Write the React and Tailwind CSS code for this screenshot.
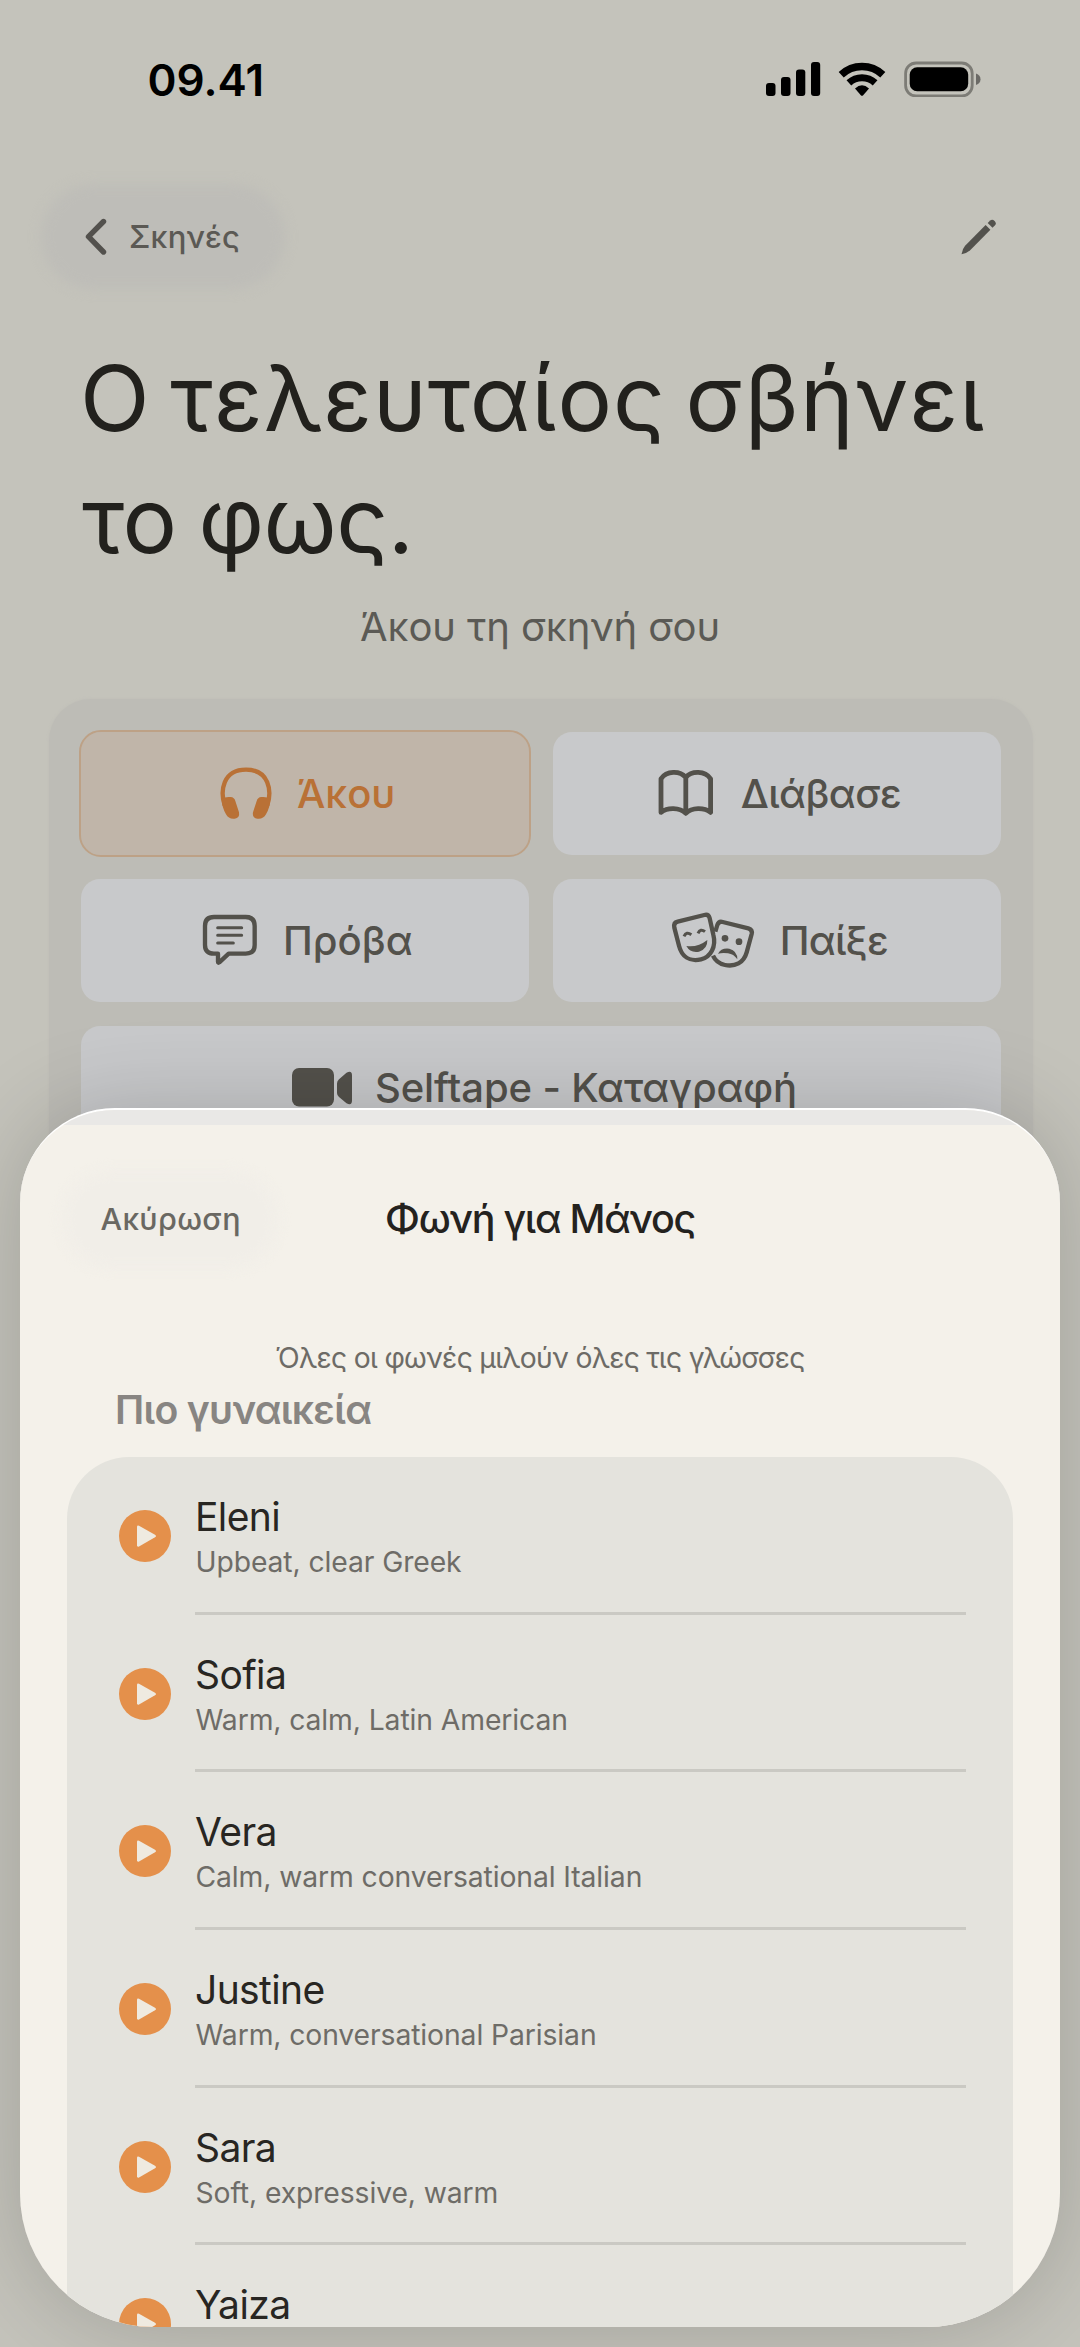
import React from "react";

const voices = [
  { name: "Eleni", note: "Upbeat, clear Greek" },
  { name: "Sofia", note: "Warm, calm, Latin American" },
  { name: "Vera", note: "Calm, warm conversational Italian" },
  { name: "Justine", note: "Warm, conversational Parisian" },
  { name: "Sara", note: "Soft, expressive, warm" },
  { name: "Yaiza", note: "" },
];

function SignalIcon() {
  return (
    <svg className="h-[36px] w-[55px]" viewBox="766 61 55 36">
      <rect x="766" y="83" width="9.5" height="13" rx="3" />
      <rect x="781" y="77" width="9.5" height="19" rx="3" />
      <rect x="796" y="69.5" width="9.3" height="26.5" rx="3" />
      <rect x="811" y="62" width="9.2" height="34" rx="3" />
    </svg>
  );
}

function WifiIcon() {
  return (
    <svg className="ml-[17px] h-[36px] w-[48px]" viewBox="838 61 48 36">
      <g fill="none" stroke="#000">
        <path d="M841.2 74.8 A30.4 30.4 0 0 1 882.8 74.8" strokeWidth="7.4" />
        <path d="M848.9 82.9 A19.4 19.4 0 0 1 875.1 82.9" strokeWidth="7" />
      </g>
      <path d="M855 88.6 Q862 82 869 88.6 L863.2 95.2 Q862 96.5 860.8 95.2Z" />
    </svg>
  );
}

function BatteryIcon() {
  return (
    <svg className="ml-[18px] h-[36px] w-[77px]" viewBox="904 61 77 36">
      <rect x="905.6" y="63" width="66.6" height="33" rx="10.5" fill="none" stroke="#7d7c76" strokeWidth="2.8" />
      <rect x="909.7" y="67.2" width="58.5" height="24" rx="7.5" />
      <path d="M976 73.5 Q980.5 75 980.5 79.3 Q980.5 83.5 976 85Z" fill="#6b6a66" />
    </svg>
  );
}

function PencilIcon() {
  return (
    <svg className="h-[36px] w-[36px]" viewBox="960 218 36 36" fill="#53524d">
      <path d="M984.6 223.9 L989.4 228.7 L968.9 249.4 Q966 252 960.500 253.200 Q961.500 247.500 964.100 244.700Z" />
      <path d="M986.7 222 L989.2 219.600 Q991.300 217.900 993.600 220 Q995.800 222.200 994 224.300 L991.500 226.800Z" />
    </svg>
  );
}

function HeadphonesIcon() {
  return (
    <svg className="h-[54px] w-[54px]" viewBox="87 50 162 162" fill="#b97136">
      <path d="M104 168 C90 125 98 61 168 61 C238 61 246 125 232 168" fill="none" stroke="#b97136" strokeWidth="13" />
      <path d="M95 150 Q105 141 122 143 Q133 144 136 155 L147 189 Q150 206 134 208 Q116 210 108 195 Q96 175 95 150Z" />
      <path d="M241 150 Q231 141 214 143 Q203 144 200 155 L189 189 Q186 206 202 208 Q220 210 228 195 Q240 175 241 150Z" />
    </svg>
  );
}

function BookIcon() {
  return (
    <svg className="h-[50px] w-[58px]" viewBox="656 769 58 50" fill="none" stroke="#53514b" strokeWidth="4.8" strokeLinejoin="round" strokeLinecap="round">
      <path d="M684.8 778.5 C679 771.5 665.5 771.5 660 779.8 V813.4 C666.5 808.3 678.5 808.3 684.8 814.4 C691 808.3 703 808.3 709.6 813.4 V779.8 C704 771.5 690.5 771.5 684.8 778.5 V814" />
    </svg>
  );
}

function ChatIcon() {
  return (
    <svg className="h-[54px] w-[56px]" viewBox="36 492 168 162" fill="none" stroke="#53514b" strokeLinecap="round" strokeLinejoin="round">
      <path d="M72 504 H167 Q194 504 194 531 V588 Q194 614 167 614 H116 L88 640 Q84 643 84 638 V614 H72 Q45 614 45 588 V531 Q45 504 72 504Z" strokeWidth="13" />
      <path d="M83 536 H155 M83 559 H155 M83 582 H130" strokeWidth="9" />
    </svg>
  );
}

function MasksIcon() {
  return (
    <svg className="h-[62px] w-[88px]" viewBox="27 28 264 186" fill="none" stroke="#53514b" strokeLinejoin="round">
      <path d="M50 66 L130 46 Q143 43 146 56 L157 105 C166 140 150 172 120 179 C85 187 62 170 54 138 L40 84 Q37 69 50 66Z" strokeWidth="13" />
      <path d="M163 96 L169 76 Q173 64 185 67 L262 86 Q275 90 272 103 L257 158 C248 190 222 202 192 196 C174 192 162 182 156 168" strokeWidth="13" />
      <path d="M69 110 Q76 94 91 105 M111 101 Q118 85 132 96" strokeWidth="9" />
      <g fill="#53514b" stroke="none">
        <path d="M76 139 Q110 144 139 121 Q140 148 114 156 Q88 161 76 139Z" />
        <circle cx="192" cy="116" r="10" />
        <circle cx="234" cy="126" r="10" />
        <path d="M171 162 Q180 144 205 147 Q229 153 229 179 Q218 163 201 161 Q185 158 171 162Z" />
      </g>
    </svg>
  );
}

function VideoIcon() {
  return (
    <svg className="h-[40px] w-[62px]" viewBox="290 1068 62 40" fill="#53514b">
      <rect x="291" y="1069" width="42" height="38.5" rx="7" />
      <path d="M336 1084.5 Q336 1082 338 1080.2 L345.5 1073.8 Q351 1071 351 1076.5 V1101.5 Q351 1107 345.5 1104.2 L338 1098 Q336 1096.5 336 1094Z" />
    </svg>
  );
}

function PlayIcon() {
  return (
    <svg className="ml-[51px] h-[54px] w-[54px] shrink-0" viewBox="0 0 54 54">
      <circle cx="27" cy="27" r="26" fill="#e4904b" />
      <path d="M21 16.700 L37 25.700 Q39 27 37 28.300 L21 37.500 Q19 38.200 19 36.200 V18 Q19 16 21 16.700Z" fill="#efeae0" />
    </svg>
  );
}

const tile = "flex h-[123.5px] items-center rounded-[19px] bg-[#c8c9cb] text-[40px] font-medium text-[#53514b]";

function ScenePage() {
  return (
    <div className="h-full w-full">
      <div className="flex h-[158px] items-center">
        <span className="ml-[147.5px] mt-[2px] text-[44px] font-semibold leading-none text-black">09.41</span>
        <div className="ml-auto mr-[99px] flex items-center">
          <SignalIcon />
          <WifiIcon />
          <BatteryIcon />
        </div>
      </div>

      <div className="mt-[23px] flex h-[111px] items-center justify-between pr-[83.5px]">
        <div className="relative ml-[38px] flex h-[111px] w-[250px] items-center">
          <div className="absolute inset-[3px] rounded-full bg-[#bebdb8] blur-[6px]" />
          <svg className="relative ml-[46px] h-[38px] w-[24px]" viewBox="0 0 24 38" fill="none" stroke="#53514d" strokeWidth="5.4" strokeLinecap="round" strokeLinejoin="round">
            <path d="M19.5 3.500 L4.500 18.700 L19.500 34" />
          </svg>
          <span className="relative ml-[21px] text-[31px] font-medium leading-none tracking-[0.150px] text-[#5b5954]">Σκηνές</span>
        </div>
        <PencilIcon />
      </div>

      <h1 className="ml-[80px] mt-[45px] text-[91px] leading-[122px] text-[#22211d]">
        <span className="block whitespace-nowrap tracking-[1.05px] [word-spacing:-7px]">Ο τελευταίος σβήνει</span>
        <span className="ml-[2px] block whitespace-nowrap tracking-[-0.5px] [word-spacing:-3px]">το φως.</span>
      </h1>
      <p className="mt-[22px] text-center text-[40px] leading-[48px] tracking-[-0.1px] text-[#5b5a55]">Άκου τη σκηνή σου</p>

      <div className="ml-[49px] mt-[47.5px] h-[600px] w-[984px] rounded-[42px] bg-[#bdbcb6] px-[32px] pt-[33px] shadow-[0_0_3px_#bdbcb6]">
        <div className="grid grid-cols-2 gap-[23.5px]">
          <div className="flex h-[123.5px] items-center rounded-[20px] bg-[#c0b5a9] text-[40px] font-medium text-[#b97136] outline-2 outline-[#bda186]">
            <div className="ml-[138px]"><HeadphonesIcon /></div>
            <span className="ml-[24px] mt-[2px]">Άκου</span>
          </div>
          <div className={tile}>
            <div className="ml-[104px]"><BookIcon /></div>
            <span className="ml-[26px] mt-[2px] tracking-[-0.6px]">Διάβασε</span>
          </div>
          <div className={tile}>
            <div className="ml-[121px]"><ChatIcon /></div>
            <span className="ml-[25px] mt-[2px]">Πρόβα</span>
          </div>
          <div className={tile}>
            <div className="ml-[117px]"><MasksIcon /></div>
            <span className="ml-[22px] mt-[2px] tracking-[-0.8px]">Παίξε</span>
          </div>
          <div className={tile + " col-span-2"}>
            <div className="ml-[210px]"><VideoIcon /></div>
            <span className="ml-[22px] mt-[2px] tracking-[-0.13px]">Selftape - Καταγραφή</span>
          </div>
        </div>
      </div>
    </div>
  );
}

function VoiceSheet() {
  return (
    <div className="absolute left-[20px] top-[1108px] h-[1219px] w-[1040px] rounded-b-[134px] rounded-t-[95px] shadow-[0_0_90px_rgba(0,0,0,0.18)]">
      <div className="h-full w-full overflow-hidden rounded-b-[134px] rounded-t-[95px] border-t-2 border-white bg-[#f4f1ea]">
        <div className="h-[15px] bg-[#e9e8e6]" />
        <div className="mt-[46px] grid h-[97px] grid-cols-[1fr_auto_1fr] items-center">
          <div className="relative ml-[42px] flex h-[97px] w-[216px] items-center">
            <div className="absolute inset-0 rounded-full bg-[#f1eee8] blur-[6px]" />
            <span className="relative ml-[38.5px] text-[30.5px] font-medium leading-none tracking-[0.3px] text-[#6a6862]">Ακύρωση</span>
          </div>
          <h2 className="text-[39.4px] font-medium leading-none tracking-[-1.25px] text-[#24221e]">Φωνή για Μάνος</h2>
          <span />
        </div>
        <p className="mt-[72px] text-center text-[28.3px] leading-[36px] tracking-[-0.68px] text-[#6d6b66]">Όλες οι φωνές μιλούν όλες τις γλώσσες</p>
        <h3 className="ml-[95px] mt-[14px] text-[39.2px] font-semibold leading-[40px] tracking-[-0.7px] text-[#888582]">Πιο γυναικεία</h3>

        <ul className="mx-[47px] mt-[27px] rounded-t-[62px] bg-[#e4e3dd]">
          {voices.map((v) => (
            <li key={v.name} className="flex h-[157.7px] items-center">
              <PlayIcon />
              <div className="ml-[23px] mr-[47.5px] h-full flex-1 border-b-[3px] border-[#cac9c3] pt-[37px]">
                <div className="text-[39px] leading-[46px] tracking-[-0.6px] text-[#282622]">{v.name}</div>
                <div className="ml-[0.5px] text-[28.3px] leading-[44px] tracking-[-0.1px] text-[#6e6c67]">{v.note}</div>
              </div>
            </li>
          ))}
        </ul>
      </div>
    </div>
  );
}

export default function App() {
  return (
    <div className="relative h-[2347px] w-[1080px] overflow-hidden bg-[#c4c3bb] font-['Inter',sans-serif]">
      <ScenePage />
      <VoiceSheet />
    </div>
  );
}
